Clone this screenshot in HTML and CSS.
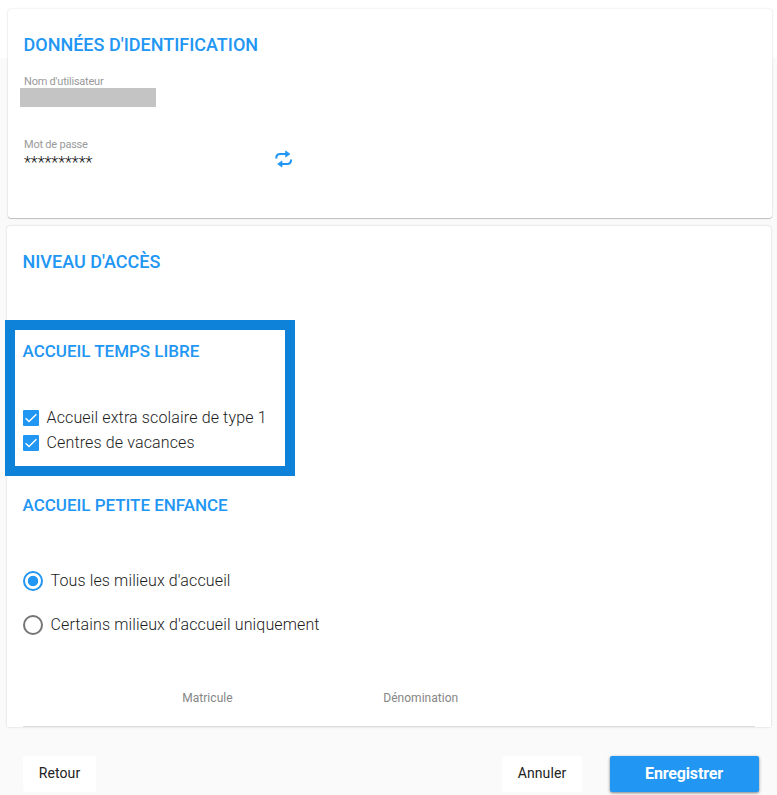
FILE: index.html
```html
<!DOCTYPE html>
<html lang="fr">
<head>
<meta charset="utf-8">
<title>Données d'identification</title>
<link rel="stylesheet" href="styles.css">
</head>
<body>
<main class="page">
  <section class="card identity">
    <h2 class="title">DONNÉES D'IDENTIFICATION</h2>
    <div class="label">Nom d'utilisateur</div>
    <div class="masked"></div>
    <div class="label password-label">Mot de passe</div>
    <div class="password-row">
      <span class="password">**********</span>
      <svg class="refresh" viewBox="0 0 18 18" width="18" height="18">
        <path d="M1.3 8.6V8Q1.3 4 5.2 4H11M16 9.4V10Q16 14 12.1 14H6.4" fill="none" stroke="currentColor" stroke-width="2.1"/>
        <path d="M10.6 .9L15 4L10.6 7.1zM7 10.9L2.6 14L7 17.1z" fill="currentColor" stroke="currentColor" stroke-width=".7"/>
      </svg>
    </div>
  </section>

  <section class="card access">
    <h2 class="title">NIVEAU D'ACCÈS</h2>
    <div class="highlight">
      <h3 class="subtitle">ACCUEIL TEMPS LIBRE</h3>
      <div class="checks">
        <div class="check"><svg class="box" viewBox="0 0 16 16" width="16" height="16"><rect width="16" height="16" rx="1" fill="#2196f3"/><path d="M2.6 8.2L6 11.5L13.4 4.2" fill="none" stroke="#fff" stroke-width="1.4"/></svg><span>Accueil extra scolaire de type 1</span></div>
        <div class="check"><svg class="box" viewBox="0 0 16 16" width="16" height="16"><rect width="16" height="16" rx="1" fill="#2196f3"/><path d="M2.6 8.2L6 11.5L13.4 4.2" fill="none" stroke="#fff" stroke-width="1.4"/></svg><span>Centres de vacances</span></div>
      </div>
    </div>
    <h3 class="subtitle childhood">ACCUEIL PETITE ENFANCE</h3>
    <div class="radio"><span class="dot selected"></span><span class="choice">Tous les milieux d'accueil</span></div>
    <div class="radio"><span class="dot"></span><span class="choice">Certains milieux d'accueil uniquement</span></div>
    <div class="table-head"><span class="c1">Matricule</span><span class="c2">Dénomination</span></div>
  </section>

  <footer class="actions">
    <button class="btn back">Retour</button>
    <button class="btn cancel">Annuler</button>
    <button class="btn save">Enregistrer</button>
  </footer>
</main>
</body>
</html>
```
FILE: styles.css
```css
* { box-sizing: border-box; }
body {
  margin: 0;
  height: 795px;
  overflow: hidden;
  background: linear-gradient(#fff 58px, #fafafa 58px);
  font-family: Roboto, sans-serif;
  color: #1c1c1c;
}
h2, h3 { margin: 0; font-weight: 500; color: #2196f3; }
.page { padding-top: 9px; }
.card {
  display: flow-root;
  background: #fff;
  border-radius: 3px;
}
.identity {
  width: 764px;
  height: 209px;
  margin-left: 8px;
  padding: 25px 15px 0 16px;
  box-shadow: 0 1px 1px rgba(0, 0, 0, .2), 0 0 2px rgba(0, 0, 0, .16);
}
.title { margin-left: -.5px; font-size: 18px; line-height: 22px; }
.label { font-size: 11px; line-height: 14px; font-weight: 400; color: #999; margin-top: 19px; letter-spacing: -.22px; }
.masked { width: 136px; height: 19px; margin: -1px 0 0 -4px; background: #c4c4c4; }
.password-label { margin-top: 31px; }
.password-row { display: flex; height: 18px; align-items: center; margin-top: -2px; }
.password { width: 251px; margin-top: 7px; font-size: 16px; line-height: 18px; font-weight: 300; color: #111; letter-spacing: .05px; }
.refresh { color: #2196f3; flex: none; }
.access {
  width: 764px;
  height: 501px;
  margin: 8px 0 0 7px;
  padding: 25px 16px 0;
  border-radius: 3px 3px 0 0;
  box-shadow: 0 0 2px rgba(0, 0, 0, .22);
}
.highlight {
  width: 290px;
  height: 156px;
  margin: 47px 0 0 -18px;
  padding: 11px 0 0 7.5px;
  border: 10px solid #0d82d8;
}
.subtitle { font-size: 17px; line-height: 21px; letter-spacing: -.02px; }
.checks { margin: 43px 0 0 .5px; }
.check { display: flex; height: 25px; align-items: center; font-size: 16px; font-weight: 300; letter-spacing: .14px; }
.box { margin-right: 7.5px; }
.childhood { margin: 19px 0 43px -.5px; }
.radio { display: flex; height: 44px; align-items: center; font-size: 16px; font-weight: 300; letter-spacing: .13px; }
.choice { padding-bottom: 2px; }
.dot { width: 20px; height: 20px; margin-right: 7.5px; border: 2px solid #757575; border-radius: 50%; }
.selected { border-color: #2196f3; background: radial-gradient(circle, #2196f3 4.8px, transparent 5.6px); }
.table-head {
  display: grid;
  grid-template-columns: 159.25px 201px 1fr;
  height: 60px;
  margin-top: 20px;
  padding-top: 23px;
  border-bottom: 1px solid #ddd;
  font-size: 12px;
  line-height: 16px;
  color: #868686;
  font-weight: 400;
  letter-spacing: .03px;
}
.c1 { grid-column: 2; }
.actions { display: flex; margin-top: 29px; padding: 0 18px 0 23px; }
.btn {
  height: 36px;
  padding: 0;
  border: 0;
  border-radius: 3px;
  background: #fff;
  font: 400 14px/34px Roboto, sans-serif;
  letter-spacing: .1px;
  color: #222;
}
.back, .cancel { padding-bottom: 2px; }
.back { width: 73px; }
.cancel { width: 80px; margin-left: auto; }
.save {
  width: 149px;
  margin-left: 28px;
  padding-right: 1px;
  border-radius: 2px;
  background: #2196f3;
  box-shadow: 0 1px 3px rgba(0, 0, 0, .5);
  color: #fff;
  font-size: 16px;
  font-weight: 700;
  letter-spacing: -.15px;
}
```
